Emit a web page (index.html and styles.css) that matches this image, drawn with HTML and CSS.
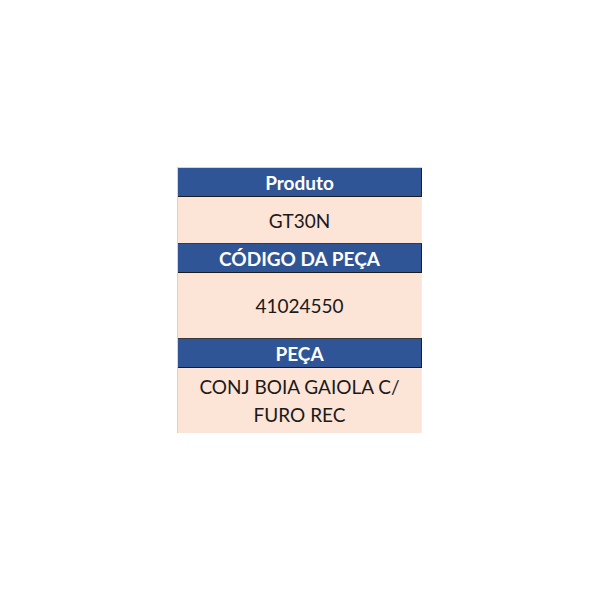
FILE: index.html
```html
<!DOCTYPE html>
<html lang="pt">
<head>
<meta charset="utf-8">
<link rel="stylesheet" href="styles.css">
</head>
<body>
<div class="page">
  <div class="sheet">
    <div class="head h1">Produto</div>
    <div class="cell c1">GT30N</div>
    <div class="head h2">CÓDIGO DA PEÇA</div>
    <div class="cell c2">41024550</div>
    <div class="head h3">PEÇA</div>
    <div class="cell c3">CONJ BOIA GAIOLA C/ FURO REC</div>
  </div>
</div>
</body>
</html>
```
FILE: styles.css
```css
html, body {
  margin: 0;
  padding: 0;
  background: #ffffff;
}
.page {
  width: 600px;
  height: 600px;
  display: flex;
  align-items: flex-start;
  justify-content: flex-start;
  padding: 167px 0 0 177px;
  box-sizing: border-box;
}
.sheet {
  width: 245px;
  display: flex;
  flex-direction: column;
  border-top: 1px solid #d4d4d4;
  border-left: 1px solid #d4d4d4;
  box-sizing: border-box;
  font-family: Lato, "Open Sans", sans-serif;
  text-align: center;
}
.head {
  background: #2f5597;
  color: #ffffff;
  font-weight: bold;
  font-size: 19px;
  display: flex;
  align-items: center;
  justify-content: center;
  border-right: 1px solid #222;
  box-sizing: border-box;
}
.h1 { height: 29px; border-bottom: 1px solid #1c1c1c; }
.h2 { height: 30px; border-top: 1px solid #3a3a3a; border-bottom: 1px solid #1c1c1c; }
.h3 { height: 30px; border-top: 1px solid #3a3a3a; border-bottom: 1px solid #1c1c1c; }
.cell {
  background: #fce4d6;
  color: #1a1a1a;
  font-size: 19px;
  display: flex;
  align-items: center;
  justify-content: center;
  border-right: 1px solid #f3ede9;
  box-sizing: border-box;
}
.c1 { height: 46px; }
.c2 { height: 65px; }
.c3 { height: 65px; line-height: 28px; padding: 0 16px; }
```
